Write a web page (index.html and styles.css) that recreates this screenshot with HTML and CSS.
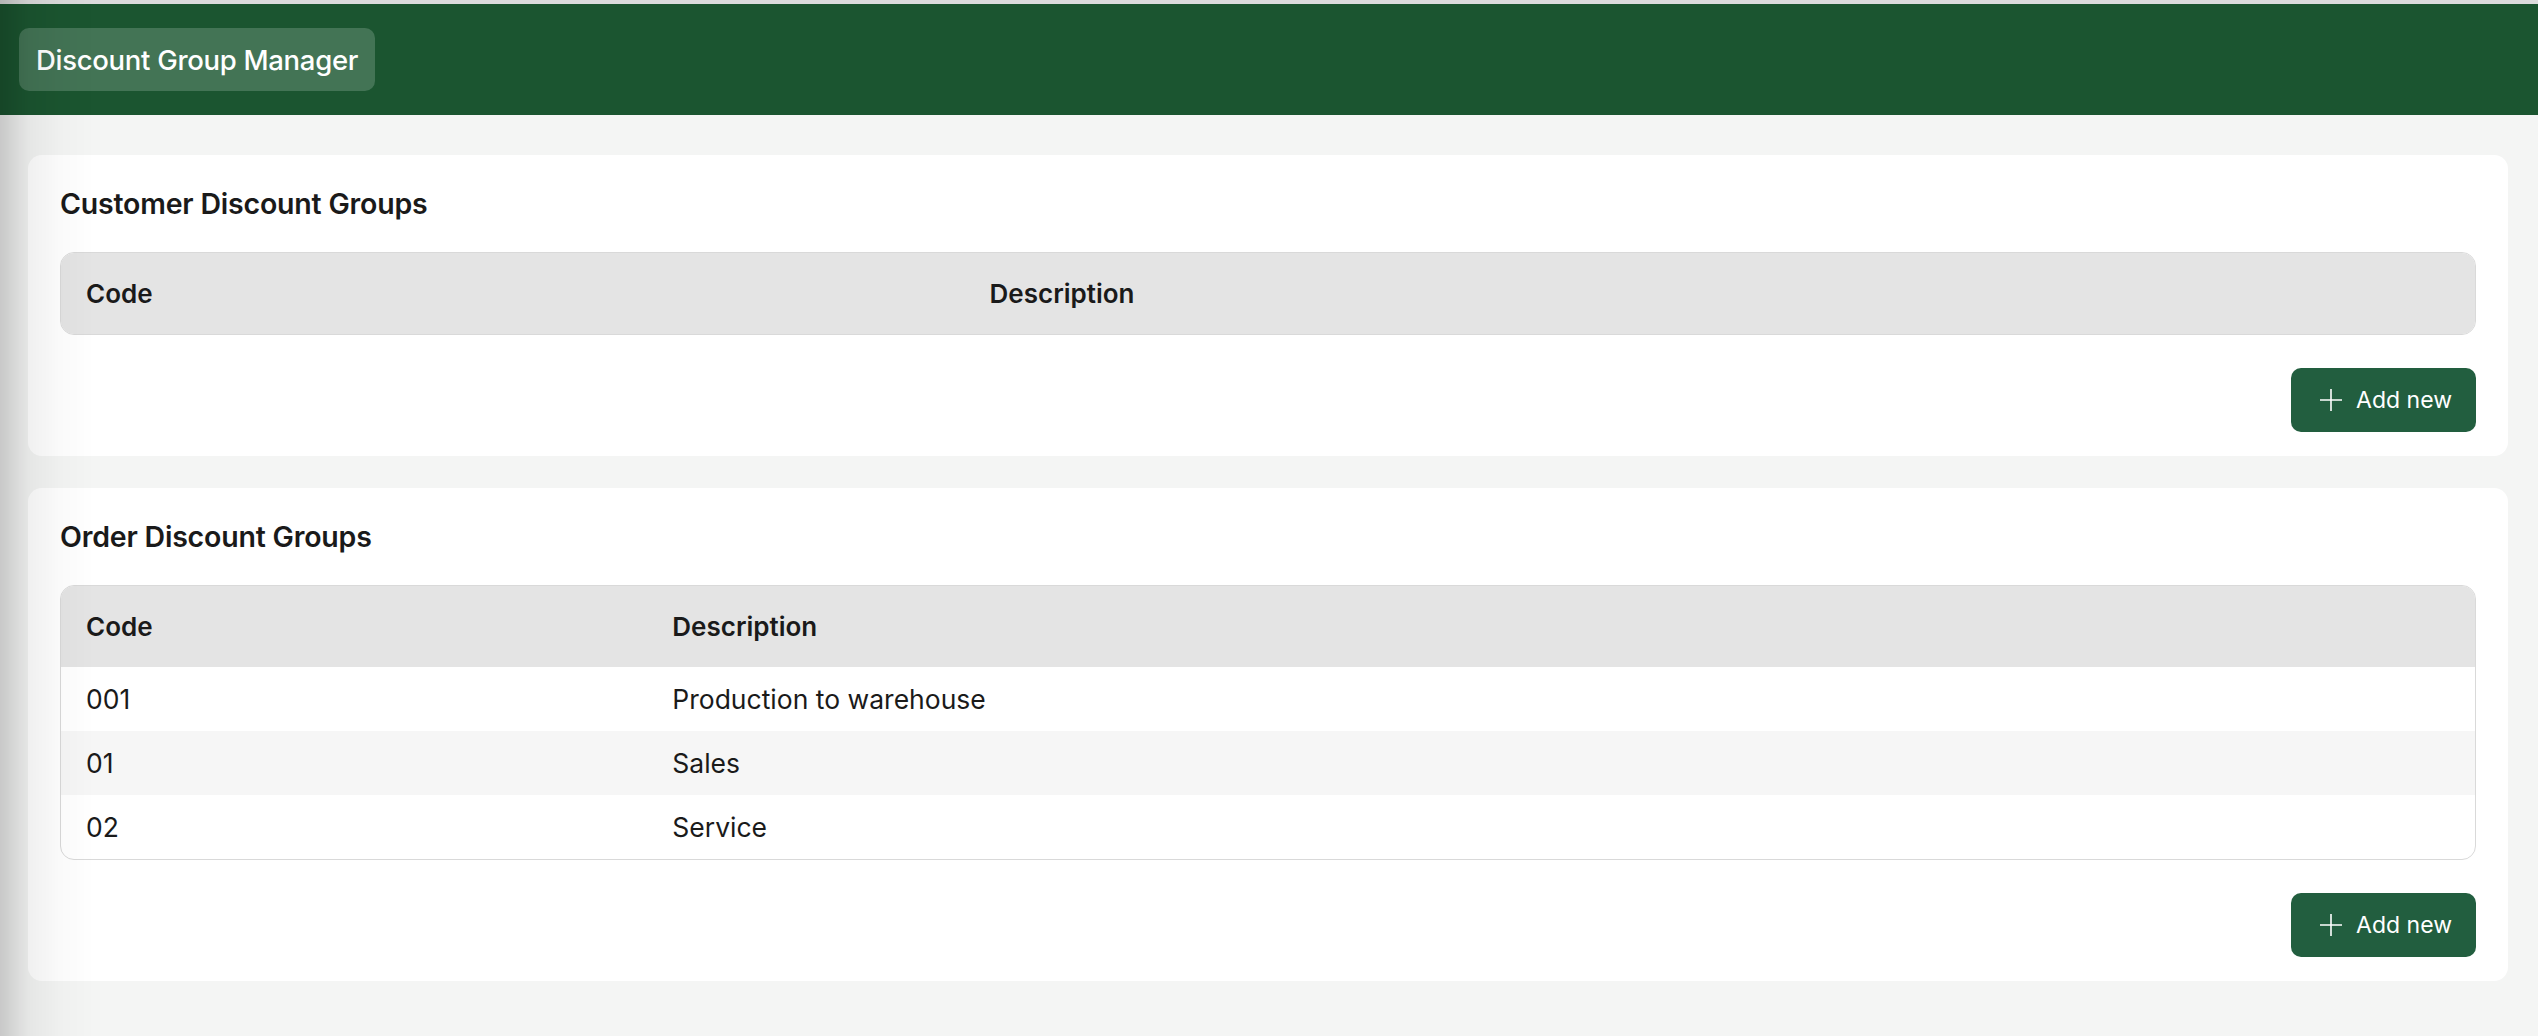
FILE: index.html
```html
<!DOCTYPE html>
<html lang="en">
<head>
<meta charset="UTF-8">
<title>Discount Group Manager</title>
<link rel="stylesheet" href="styles.css">
</head>
<body>
<header class="topbar">
    <div class="app-title">Discount Group Manager</div>
</header>

<main class="content">
    <!-- customer groups -->
    <section class="card">
        <h2 class="card-title">Customer Discount Groups</h2>
        <div class="table-wrap">
            <table class="grid">
                <thead>
                    <tr><th>Code</th><th>Description</th></tr>
                </thead>
                <tbody></tbody>
            </table>
        </div>
        <div class="actions">
            <button class="btn-add" type="button">
                <svg width="24" height="24" viewBox="0 0 24 24"><path d="M12 1v22M1 12h22" stroke="#fff" stroke-width="1.6" fill="none"/></svg>
                Add new
            </button>
        </div>
    </section>

    <!-- order groups -->
    <section class="card">
        <h2 class="card-title">Order Discount Groups</h2>
        <div class="table-wrap">
            <table class="grid">
                <thead>
                    <tr><th>Code</th><th>Description</th></tr>
                </thead>
                <tbody>
                    <tr><td>001</td><td>Production to warehouse</td></tr>
                    <tr><td>01</td><td>Sales</td></tr>
                    <tr><td>02</td><td>Service</td></tr>
                </tbody>
            </table>
        </div>
        <div class="actions">
            <button class="btn-add" type="button">
                <svg width="24" height="24" viewBox="0 0 24 24"><path d="M12 1v22M1 12h22" stroke="#fff" stroke-width="1.6" fill="none"/></svg>
                Add new
            </button>
        </div>
    </section>
</main>
</body>
</html>
```

FILE: styles.css
```css
html, body {
  height: 100%;
}
body {
  font-family: 'Inter', 'Liberation Sans', sans-serif;
  background-color: #f4f5f4;
  color: #1a1a1a;
  margin: 0;
  border-top: 4px solid #dcdcdc;
  box-sizing: border-box;
}
/* soft shade along the left edge of the window */
body::before {
  content: "";
  position: fixed;
  top: 0;
  left: 0;
  bottom: 0;
  width: 95px;
  background: linear-gradient(to right, rgba(0,0,0,0.18), rgba(0,0,0,0.06) 28px, rgba(0,0,0,0.02) 60px, rgba(0,0,0,0));
  pointer-events: none;
}
.topbar {
  background-color: #1b5530;
  height: 111px;
  display: flex;
  align-items: center;
  padding: 0 19px;
  box-sizing: border-box;
}
.app-title {
  background-color: #437455;
  color: #fff;
  font-size: 27.5px;
  font-weight: 500;
  letter-spacing: -0.3px;
  height: 63px;
  display: flex;
  align-items: center;
  padding: 0 17px 0 17px;
  border-radius: 10px;
}
.content {
  padding: 40px 30px 0 28px;
  display: flex;
  flex-direction: column;
  gap: 32px;
}
.card {
  background-color: #fff;
  border-radius: 14px;
  padding: 32px 32px 24px 32px;
}
.card-title {
  font-size: 28.5px;
  font-weight: 600;
  line-height: 34px;
  margin: 0 0 31px 0;
  letter-spacing: -0.2px;
}
.table-wrap {
  border: 1.5px solid #d9d9d9;
  border-radius: 14px;
  overflow: hidden;
}
.grid {
  width: 100%;
  border-collapse: collapse;
  font-size: 26.5px;
}
.grid th {
  background-color: #e4e4e4;
  text-align: left;
  font-weight: 600;
  font-size: 26px;
  line-height: 39px;
  padding: 21px 25px;
}
.grid td {
  line-height: 38px;
  padding: 13px 25px;
}
.grid tbody tr:nth-child(even) td {
  background-color: #f6f6f6;
}
.actions {
  display: flex;
  justify-content: flex-end;
  margin-top: 33px;
}
.btn-add {
  background-color: #225e3f;
  color: #fff;
  border: none;
  border-radius: 10px;
  height: 64px;
  padding: 0 24px 0 28px;
  display: flex;
  align-items: center;
  gap: 13px;
  font-family: inherit;
  font-size: 23px;
  cursor: pointer;
}
```
